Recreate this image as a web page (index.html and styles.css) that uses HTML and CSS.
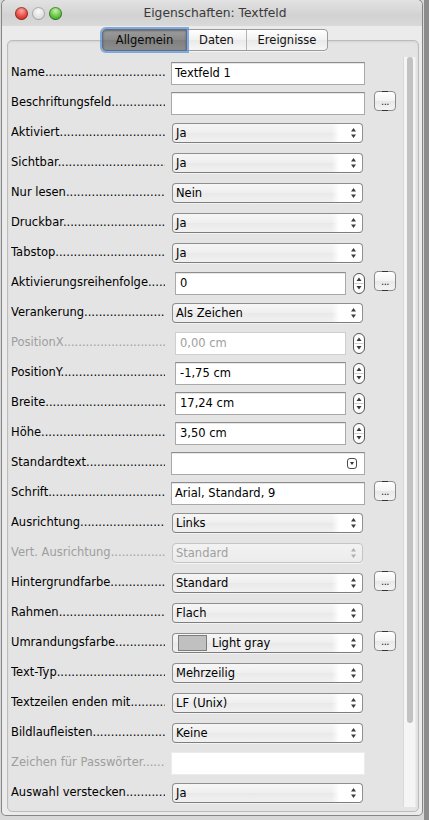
FILE: index.html
```html
<!DOCTYPE html>
<html lang="de">
<head>
<meta charset="utf-8">
<title>Eigenschaften: Textfeld</title>
<link rel="stylesheet" href="styles.css">
</head>
<body>
<svg class="defs" width="0" height="0" aria-hidden="true">
  <symbol id="updown" viewBox="0 0 5 10">
    <path d="M0 3.6 L2.5 0 L5 3.6Z M0 6.4 L2.5 10 L5 6.4Z"/>
  </symbol>
  <symbol id="spinner" viewBox="0 0 12 21">
    <rect x="0.5" y="0.5" width="11" height="20" rx="5.5" fill="#fdfdfd" stroke="#555"/>
    <line x1="1.5" y1="10.5" x2="10.5" y2="10.5" stroke="#d0d0d0"/>
    <path d="M3.5 8 L6 4.6 L8.5 8Z M3.5 13 L6 16.4 L8.5 13Z" fill="#3a3a3a"/>
  </symbol>
</svg>
<div class="screen">
  <div class="window">
    <div class="titlebar">
      <div class="lights">
        <span class="light close"></span>
        <span class="light mini"></span>
        <span class="light zoom"></span>
      </div>
      <div class="title">Eigenschaften: Textfeld</div>
    </div>

    <div class="tabs">
      <span class="tab active">Allgemein</span>
      <span class="tab">Daten</span>
      <span class="tab">Ereignisse</span>
    </div>

    <div class="group">
      <div class="rows">
        <div class="row">
          <span class="lbl">Name</span>
          <div class="ctl"><div class="tf">Textfeld 1</div></div>
        </div>
        <div class="row">
          <span class="lbl">Beschriftungsfeld</span>
          <div class="ctl"><div class="tf"></div></div>
          <span class="btn">...</span>
        </div>
        <div class="row">
          <span class="lbl">Aktiviert</span>
          <div class="ctl"><div class="sel"><span class="val">Ja</span><svg class="ud"><use href="#updown"/></svg></div></div>
        </div>
        <div class="row">
          <span class="lbl">Sichtbar</span>
          <div class="ctl"><div class="sel"><span class="val">Ja</span><svg class="ud"><use href="#updown"/></svg></div></div>
        </div>
        <div class="row">
          <span class="lbl">Nur lesen</span>
          <div class="ctl"><div class="sel"><span class="val">Nein</span><svg class="ud"><use href="#updown"/></svg></div></div>
        </div>
        <div class="row">
          <span class="lbl">Druckbar</span>
          <div class="ctl"><div class="sel"><span class="val">Ja</span><svg class="ud"><use href="#updown"/></svg></div></div>
        </div>
        <div class="row">
          <span class="lbl">Tabstop</span>
          <div class="ctl"><div class="sel"><span class="val">Ja</span><svg class="ud"><use href="#updown"/></svg></div></div>
        </div>
        <div class="row">
          <span class="lbl">Aktivierungsreihenfolge</span>
          <div class="ctl"><div class="tf num">0</div><svg class="spin"><use href="#spinner"/></svg></div>
          <span class="btn">...</span>
        </div>
        <div class="row">
          <span class="lbl">Verankerung</span>
          <div class="ctl"><div class="sel"><span class="val">Als Zeichen</span><svg class="ud"><use href="#updown"/></svg></div></div>
        </div>
        <div class="row off">
          <span class="lbl">PositionX</span>
          <div class="ctl"><div class="tf num">0,00 cm</div><svg class="spin"><use href="#spinner"/></svg></div>
        </div>
        <div class="row">
          <span class="lbl">PositionY</span>
          <div class="ctl"><div class="tf num">-1,75 cm</div><svg class="spin"><use href="#spinner"/></svg></div>
        </div>
        <div class="row">
          <span class="lbl">Breite</span>
          <div class="ctl"><div class="tf num">17,24 cm</div><svg class="spin"><use href="#spinner"/></svg></div>
        </div>
        <div class="row">
          <span class="lbl">Höhe</span>
          <div class="ctl"><div class="tf num">3,50 cm</div><svg class="spin"><use href="#spinner"/></svg></div>
        </div>
        <div class="row">
          <span class="lbl">Standardtext</span>
          <div class="ctl"><div class="tf combo"><span class="drop"></span></div></div>
        </div>
        <div class="row">
          <span class="lbl">Schrift</span>
          <div class="ctl"><div class="tf">Arial, Standard, 9</div></div>
          <span class="btn">...</span>
        </div>
        <div class="row">
          <span class="lbl">Ausrichtung</span>
          <div class="ctl"><div class="sel"><span class="val">Links</span><svg class="ud"><use href="#updown"/></svg></div></div>
        </div>
        <div class="row off">
          <span class="lbl">Vert. Ausrichtung</span>
          <div class="ctl"><div class="sel"><span class="val">Standard</span><svg class="ud"><use href="#updown"/></svg></div></div>
        </div>
        <div class="row">
          <span class="lbl">Hintergrundfarbe</span>
          <div class="ctl"><div class="sel"><span class="val">Standard</span><svg class="ud"><use href="#updown"/></svg></div></div>
          <span class="btn">...</span>
        </div>
        <div class="row">
          <span class="lbl">Rahmen</span>
          <div class="ctl"><div class="sel"><span class="val">Flach</span><svg class="ud"><use href="#updown"/></svg></div></div>
        </div>
        <div class="row">
          <span class="lbl">Umrandungsfarbe</span>
          <div class="ctl"><div class="sel"><span class="swatch"></span><span class="val">Light gray</span><svg class="ud"><use href="#updown"/></svg></div></div>
          <span class="btn">...</span>
        </div>
        <div class="row">
          <span class="lbl">Text-Typ</span>
          <div class="ctl"><div class="sel"><span class="val">Mehrzeilig</span><svg class="ud"><use href="#updown"/></svg></div></div>
        </div>
        <div class="row">
          <span class="lbl">Textzeilen enden mit</span>
          <div class="ctl"><div class="sel"><span class="val">LF (Unix)</span><svg class="ud"><use href="#updown"/></svg></div></div>
        </div>
        <div class="row">
          <span class="lbl">Bildlaufleisten</span>
          <div class="ctl"><div class="sel"><span class="val">Keine</span><svg class="ud"><use href="#updown"/></svg></div></div>
        </div>
        <div class="row off">
          <span class="lbl">Zeichen für Passwörter</span>
          <div class="ctl"><div class="tf blank"></div></div>
        </div>
        <div class="row">
          <span class="lbl">Auswahl verstecken</span>
          <div class="ctl"><div class="sel"><span class="val">Ja</span><svg class="ud"><use href="#updown"/></svg></div></div>
        </div>
      </div>
      <div class="scrollbar"><div class="thumb"></div></div>
    </div>
  </div>
</div>
</body>
</html>
```

FILE: styles.css
```css
* { box-sizing: border-box; }

html, body {
  margin: 0;
  padding: 0;
}

body {
  font-family: "DejaVu Sans", "Noto Sans", sans-serif;
  font-size: 11.5px;
  color: #000;
  background: #8a8a8a;
}

.defs {
  position: absolute;
  width: 0;
  height: 0;
}

/* desktop behind the panel */
.screen {
  width: 429px;
  height: 820px;
  overflow: hidden;
  background: linear-gradient(to right, #d8d8d8 0 424px, #8c8c8c 424px);
}

/* the floating panel */
.window {
  margin-left: 2px;
  width: 420px;
  height: 815px;
  padding: 0 3px 3px 5px;
  background: #ebebeb;
  border-radius: 5px 5px 4px 4px;
  box-shadow: 0 0 0 1px rgba(0, 0, 0, 0.38);
}

/* title bar */
.titlebar {
  height: 26px;
  margin: 0 -3px 0 -5px;
  padding: 0 7px 0 13px;
  display: grid;
  grid-template-columns: 1fr auto 1fr;
  align-items: center;
  background: linear-gradient(#e2e2e2, #d2d2d2 60%, #d9d9d9);
  border-radius: 5px 5px 0 0;
}

.lights {
  display: flex;
  gap: 4px;
}

.light {
  width: 13px;
  height: 13px;
  border-radius: 50%;
  box-shadow: inset 0 0 0 1px rgba(0, 0, 0, 0.35);
}

.light.close {
  background: radial-gradient(circle at 50% 30%, #f7a9a3 0, #e4463d 55%, #b8241d 100%);
}

.light.mini {
  background: radial-gradient(circle at 50% 35%, #fafafa 0, #dedede 60%, #c6c6c6 100%);
  box-shadow: inset 0 0 0 1px rgba(0, 0, 0, 0.25);
}

.light.zoom {
  background: radial-gradient(circle at 50% 30%, #c8f0a8 0, #5cc23f 55%, #2f8a1e 100%);
}

.title {
  font-size: 12.3px;
  color: #3a3a3a;
}

/* segmented tab control */
.tabs {
  position: relative;
  z-index: 1;
  margin: 3px 0 0 95px;
  display: flex;
  width: 226px;
  height: 22px;
  border: 1px solid #9a9a9a;
  border-radius: 4px;
  background: linear-gradient(#ffffff, #f1f1f1 50%, #e9e9e9 51%, #f6f6f6);
  box-shadow: 0 1px 0 rgba(255, 255, 255, 0.6);
}

.tab {
  display: flex;
  align-items: center;
  justify-content: center;
  height: 100%;
  color: #111;
}

.tab:nth-child(1) { width: 84px; }
.tab:nth-child(2) { width: 60px; border-right: 1px solid #b4b4b4; }
.tab:nth-child(3) { flex: 1; }

.tab.active {
  margin: -1px 0 -1px -1px;
  height: 22px;
  width: 85px;
  border-radius: 4px 0 0 4px;
  background: linear-gradient(#9d9d9d, #8a8a8a 50%, #7f7f7f 51%, #8d8d8d);
  border: 1px solid #5c6f88;
  box-shadow: 0 0 0 2px rgba(96, 146, 214, 0.75), inset 0 1px 2px rgba(0, 0, 0, 0.35);
  color: #0a0a0a;
}

/* group box holding the property rows */
.group {
  margin-top: -11px;
  height: 772px;
  display: flex;
  align-items: flex-start;
  padding-left: 3px;
  padding-right: 2px;
  background: #e4e4e4;
  border: 1px solid #bcbcbc;
  border-radius: 5px;
  box-shadow: inset 0 1px 2px rgba(0, 0, 0, 0.08);
  overflow: hidden;
}

.rows {
  padding-top: 17px;
  width: 385px;
}

.row {
  height: 30px;
  display: grid;
  grid-template-columns: 160px 203px 22px;
  align-items: center;
}

.lbl {
  width: 154px;
  overflow: hidden;
  white-space: nowrap;
  margin-top: -2px;
}

.lbl::after {
  content: "....................................................................";
}

.row.off .lbl { color: #9e9e9e; }

.ctl {
  display: flex;
  align-items: center;
}

/* text fields */
.tf {
  width: 194px;
  height: 23px;
  padding: 0 0 0 3px;
  display: flex;
  align-items: center;
  background: #fff;
  border: 1px solid #a9a9a9;
  border-top-color: #8e8e8e;
  box-shadow: inset 0 1px 0 #e6e6e6;
  white-space: nowrap;
}

.tf.num {
  width: 171px;
  margin-left: 4px;
  padding-left: 4px;
}

.row.off .tf {
  color: #9e9e9e;
  border-color: #cfcfcf;
  box-shadow: none;
}

.row.off .tf.blank {
  border-color: #ececec;
}

.tf.combo {
  justify-content: flex-end;
  padding-right: 7px;
}

.drop {
  width: 10px;
  height: 11px;
  border: 1px solid #4c4c4c;
  border-radius: 3px;
  background: #fdfdfd;
  display: flex;
  align-items: center;
  justify-content: center;
}

.drop::after {
  content: "";
  border-left: 2.5px solid transparent;
  border-right: 2.5px solid transparent;
  border-top: 3.5px solid #333;
  margin-top: 1px;
}

.spin {
  width: 12px;
  height: 21px;
  margin-left: 7px;
}

/* pop-up menus */
.sel {
  margin-left: 1px;
  width: 191px;
  height: 20px;
  padding: 0 6px 0 3px;
  display: flex;
  align-items: center;
  border: 1px solid #8f8f8f;
  border-bottom-color: #7d7d7d;
  border-radius: 4px;
  background:
    linear-gradient(to right, rgba(255, 255, 255, 0) 0, rgba(255, 255, 255, 0) 84%, #ffffff 88%, #ffffff 100%),
    linear-gradient(#f6f6f6, #efefef 50%, #e9e9e9 51%, #f1f1f1);
  box-shadow: 0 1px 0 rgba(255, 255, 255, 0.55);
  white-space: nowrap;
}

.sel .val {
  flex: 1;
}

.ud {
  width: 5px;
  height: 10px;
  fill: #3c3c3c;
  flex: none;
}

.row.off .sel {
  border-color: #c4c4c4;
  color: #a0a0a0;
  background: linear-gradient(#f2f2f2, #ececec);
}

.row.off .ud { fill: #b0b0b0; }

.swatch {
  width: 29px;
  height: 16px;
  margin: 0 5px 0 2px;
  background: #c0c0c0;
  border: 1px solid #7c7c7c;
  flex: none;
}

/* small "..." push buttons */
.btn {
  position: relative;
  align-self: start;
  margin-top: 3px;
  width: 22px;
  height: 20px;
  border: 1px solid #8b8b8b;
  border-radius: 4px;
  background: linear-gradient(#ffffff, #f3f3f3 50%, #e8e8e8 51%, #f4f4f4);
  font-size: 10px;
  line-height: 1;
  text-align: center;
  padding-top: 5px;
  letter-spacing: -0.5px;
  color: #222;
}

.btn::before,
.btn::after {
  content: "";
  position: absolute;
  left: 7px;
  width: 6px;
  height: 1px;
  background: #333;
}

.btn::before { top: -1px; }
.btn::after { bottom: -1px; }

/* vertical scroller */
.scrollbar {
  margin: 16px 0 0 auto;
  width: 13px;
  height: 750px;
  padding: 0 2px 0 3px;
  background: #f5f5f5;
  border-left: 1px solid #d9d9d9;
  border-right: 1px solid #ebebeb;
}

.thumb {
  height: 666px;
  border-radius: 4px;
  background: #c2c2c2;
}
```
